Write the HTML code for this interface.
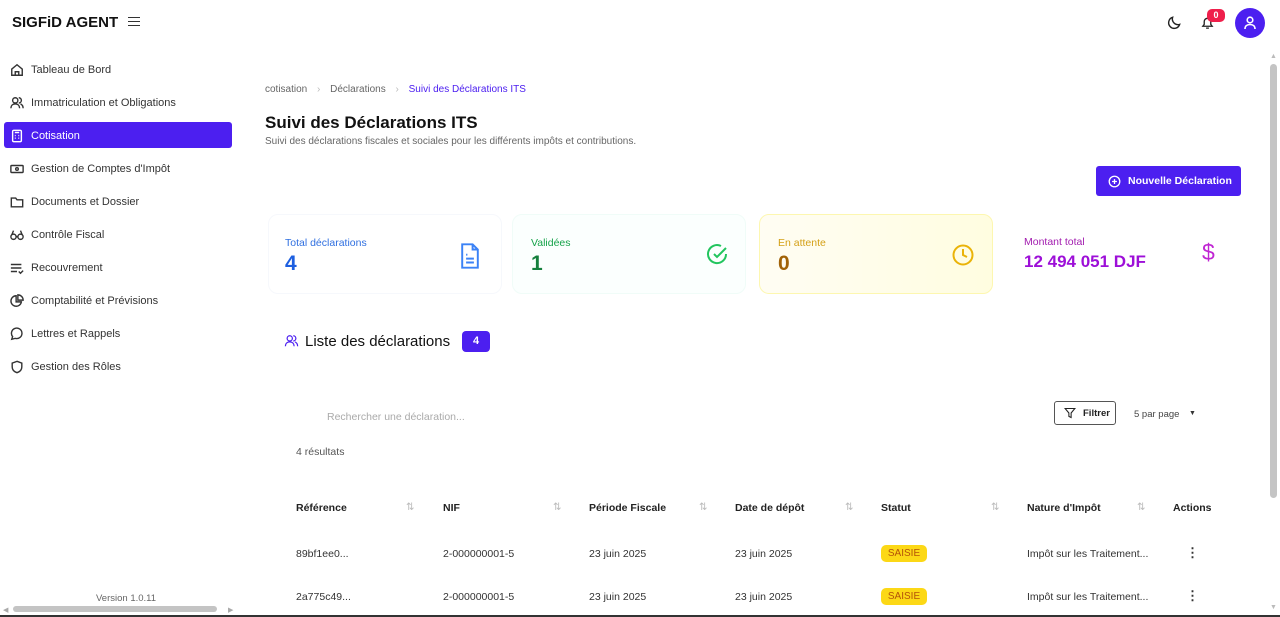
<!DOCTYPE html>
<html><head><meta charset="utf-8">
<style>
*{box-sizing:border-box;margin:0;padding:0}
body{width:1280px;height:617px;overflow:hidden;background:#fff;font-family:"Liberation Sans",sans-serif;color:#222;position:relative}
.abs{position:absolute}
.nav{position:absolute;left:10px;font-size:11px;color:#333;display:flex;align-items:center;gap:7px}
.nav svg{width:14px;height:14px;stroke:#333;fill:none;stroke-width:1.6}
.card{position:absolute;top:214px;width:234px;height:80px;border-radius:10px}
.lbl{position:absolute;left:24px;top:22px;font-size:10.5px}
.val{position:absolute;left:24px;top:37px;font-size:21px;font-weight:bold}
.th{position:absolute;top:502px;font-size:10.5px;font-weight:bold;color:#222}
.td{position:absolute;font-size:10.5px;color:#333}
.sort{position:absolute;top:502px;font-size:10px;color:#bbb}
.badge{position:absolute;left:881px;width:46px;height:17px;background:#fcd816;border-radius:5px;font-size:10px;color:#b45309;text-align:center;line-height:17px}
</style></head><body>
<div class="abs" style="left:12px;top:14px;font-size:15px;font-weight:bold;color:#111">SIGFiD AGENT</div>
<div class="abs" style="left:128px;top:17px;width:12px;height:9px;border-top:1.5px solid #333;border-bottom:1.5px solid #333"><div style="margin-top:2.5px;border-top:1.5px solid #333"></div></div>

<div class="nav" style="top:63px"><svg viewBox="0 0 16 16"><path d="M2 14V7l6-5 6 5v7z M6 14v-4h4v4"/></svg>Tableau de Bord</div>
<div class="nav" style="top:96px"><svg viewBox="0 0 16 16"><circle cx="6" cy="5" r="3"/><path d="M1 14c0-3 2-5 5-5s5 2 5 5M10 2a3 3 0 010 6M12 9c2 1 3 3 3 5"/></svg>Immatriculation et Obligations</div>
<div class="abs" style="left:4px;top:122px;width:228px;height:26px;background:#4c1ff0;border-radius:3px"></div>
<div class="nav" style="top:129px;color:#fff"><svg viewBox="0 0 16 16" style="stroke:#fff"><rect x="3" y="1.5" width="10" height="13" rx="1.5"/><path d="M5.5 4h5M5.5 7.5h1M9.5 7.5h1M5.5 10.5h1M9.5 10.5h1"/></svg>Cotisation</div>
<div class="nav" style="top:162px"><svg viewBox="0 0 16 16"><rect x="1" y="4" width="14" height="8" rx="1"/><circle cx="8" cy="8" r="1.5"/></svg>Gestion de Comptes d'Impôt</div>
<div class="nav" style="top:195px"><svg viewBox="0 0 16 16"><path d="M1.5 3.5h5l1.5 2h6.5v8h-13z"/></svg>Documents et Dossier</div>
<div class="nav" style="top:228px"><svg viewBox="0 0 16 16"><circle cx="4" cy="10" r="3"/><circle cx="12" cy="10" r="3"/><path d="M7 10h2M2 8l2-5M14 8l-2-5"/></svg>Contrôle Fiscal</div>
<div class="nav" style="top:261px"><svg viewBox="0 0 16 16"><path d="M1 4h12M1 8h12M1 12h7M10 12l2 2 3-3"/></svg>Recouvrement</div>
<div class="nav" style="top:294px"><svg viewBox="0 0 16 16"><path d="M7 2a6 6 0 106 7H7z M9 1v6h6a6 6 0 00-6-6z"/></svg>Comptabilité et Prévisions</div>
<div class="nav" style="top:327px"><svg viewBox="0 0 16 16"><path d="M2 14l1-3a6 6 0 113 2z"/></svg>Lettres et Rappels</div>
<div class="nav" style="top:360px"><svg viewBox="0 0 16 16"><path d="M8 1.5l5.5 2v4.5c0 3.5-2.5 5.5-5.5 6.5C5 13.5 2.5 11.5 2.5 8V3.5z"/></svg>Gestion des Rôles</div>
<div class="abs" style="left:96px;top:593px;font-size:9.5px;color:#666">Version 1.0.11</div>
<div class="abs" style="left:3px;top:606px;font-size:7px;color:#aaa">◀</div>
<div class="abs" style="left:13px;top:606px;width:204px;height:6px;background:#c4c4c4;border-radius:3px"></div>
<div class="abs" style="left:228px;top:606px;font-size:7px;color:#aaa">▶</div>

<svg class="abs" style="left:1167px;top:15px" width="15" height="15" viewBox="0 0 16 16" fill="none" stroke="#222" stroke-width="1.5"><path d="M13.5 10A6 6 0 016 2.5 6 6 0 1013.5 10z"/></svg>
<svg class="abs" style="left:1200px;top:15px" width="15" height="15" viewBox="0 0 16 16" fill="none" stroke="#222" stroke-width="1.4"><path d="M3 12h10l-1.5-2V7a3.5 3.5 0 00-7 0v3z M6.5 14h3"/></svg>
<div class="abs" style="left:1207px;top:9px;width:18px;height:13px;background:#ef1f4b;border-radius:5px;color:#fff;font-size:9px;font-weight:bold;text-align:center;line-height:13px">0</div>
<div class="abs" style="left:1235px;top:8px;width:30px;height:30px;border-radius:50%;background:#4c1ff0"></div>
<svg class="abs" style="left:1242px;top:15px" width="16" height="16" viewBox="0 0 16 16" fill="none" stroke="#fff" stroke-width="1.6"><circle cx="8" cy="5" r="2.8"/><path d="M3 14c0-3 2-4.5 5-4.5s5 1.5 5 4.5"/></svg>
<div class="abs" style="left:1270px;top:53px;font-size:7px;color:#bbb">▲</div>
<div class="abs" style="left:1270px;top:64px;width:7px;height:434px;background:#c4c4c4;border-radius:4px"></div>
<div class="abs" style="left:1270px;top:604px;font-size:7px;color:#bbb">▼</div>
<div class="abs" style="left:0;top:615px;width:1280px;height:2px;background:#333"></div>

<div class="abs" style="left:265px;top:84px;font-size:10px;color:#666">cotisation <span style="color:#bbb;margin:0 7px">›</span> Déclarations <span style="color:#bbb;margin:0 7px">›</span> <span style="color:#4c1ff0">Suivi des Déclarations ITS</span></div>
<div class="abs" style="left:265px;top:113px;font-size:17px;font-weight:bold;color:#111">Suivi des Déclarations ITS</div>
<div class="abs" style="left:265px;top:136px;font-size:10px;color:#666">Suivi des déclarations fiscales et sociales pour les différents impôts et contributions.</div>

<div class="abs" style="left:1096px;top:166px;width:145px;height:30px;background:#4c1ff0;border-radius:3px;color:#fff;font-size:10.5px;font-weight:bold;line-height:30px;padding-left:32px">Nouvelle Déclaration</div>
<svg class="abs" style="left:1108px;top:175px" width="13" height="13" viewBox="0 0 16 16" fill="none" stroke="#fff" stroke-width="1.6"><circle cx="8" cy="8" r="6.5"/><path d="M8 5v6M5 8h6"/></svg>

<div class="card" style="left:268px;border:1px solid #f6f8fc"><div class="lbl" style="color:#2f6fe0;left:16px">Total déclarations</div><div class="val" style="color:#1d5fe0;left:16px">4</div>
<svg class="abs" style="left:190px;top:28px" width="22" height="26" viewBox="0 0 16 20" fill="none" stroke="#3b82f6" stroke-width="1.5"><path d="M2 1h8l4 4v14H2z M10 1v4h4 M5 9h1M5 12h6M5 15h6"/></svg></div>
<div class="card" style="left:512px;border:1px solid #f0fcf8;background:#fbfffe"><div class="lbl" style="color:#16a34a;left:18px">Validées</div><div class="val" style="color:#15803d;left:18px">1</div>
<svg class="abs" style="left:192px;top:28px" width="24" height="24" viewBox="0 0 24 24" fill="none" stroke="#22c55e" stroke-width="2"><path d="M21 11a9 9 0 11-5-8M9 11l3 3 9-9"/></svg></div>
<div class="card" style="left:759px;border:1px solid #fdf7b0;background:linear-gradient(90deg,#fffdf3,#fffde0)"><div class="lbl" style="color:#d4a017;left:18px">En attente</div><div class="val" style="color:#a16207;left:18px">0</div>
<svg class="abs" style="left:191px;top:28px" width="24" height="24" viewBox="0 0 24 24" fill="none" stroke="#eab308" stroke-width="2"><circle cx="12" cy="12" r="9.5"/><path d="M12 6v6l4 2"/></svg></div>
<div class="card" style="left:1006px"><div class="lbl" style="color:#a21caf;left:18px">Montant total</div><div class="val" style="color:#9d0fd8;left:18px;font-size:17px;top:38px">12 494 051 DJF</div>
<div class="abs" style="left:196px;top:25px;font-size:23px;color:#c026d3">$</div></div>

<svg class="abs" style="left:284px;top:334px" width="15" height="14" viewBox="0 0 16 16" fill="none" stroke="#4c1ff0" stroke-width="1.4"><circle cx="6" cy="5" r="3"/><path d="M1 14c0-3 2-5 5-5s5 2 5 5M10 2a3 3 0 010 6M12 9c2 1 3 3 3 5"/></svg>
<div class="abs" style="left:305px;top:333px;font-size:15px;color:#111">Liste des déclarations</div>
<div class="abs" style="left:462px;top:331px;width:28px;height:21px;background:#4c1ff0;border-radius:4px;color:#fff;font-size:11px;font-weight:bold;text-align:center;line-height:21px">4</div>

<div class="abs" style="left:327px;top:411px;font-size:10.5px;color:#aaa">Rechercher une déclaration...</div>
<div class="abs" style="left:1054px;top:401px;width:62px;height:24px;border:1px solid #555;border-radius:3px;font-size:9.5px;font-weight:bold;line-height:24px;padding-left:28px">Filtrer</div>
<svg class="abs" style="left:1064px;top:407px" width="12" height="12" viewBox="0 0 16 16" fill="none" stroke="#222" stroke-width="1.4"><path d="M1.5 2h13l-5 6v6l-3-1.5V8z"/></svg>
<div class="abs" style="left:1134px;top:409px;font-size:9.5px;color:#444">5 par page</div>
<div class="abs" style="left:1189px;top:410px;font-size:7px;color:#333">▼</div>
<div class="abs" style="left:296px;top:446px;font-size:10.5px;color:#555">4 résultats</div>

<div class="th" style="left:296px">Référence</div><div class="sort" style="left:406px">⇅</div>
<div class="th" style="left:443px">NIF</div><div class="sort" style="left:553px">⇅</div>
<div class="th" style="left:589px">Période Fiscale</div><div class="sort" style="left:699px">⇅</div>
<div class="th" style="left:735px">Date de dépôt</div><div class="sort" style="left:845px">⇅</div>
<div class="th" style="left:881px">Statut</div><div class="sort" style="left:991px">⇅</div>
<div class="th" style="left:1027px">Nature d'Impôt</div><div class="sort" style="left:1137px">⇅</div>
<div class="th" style="left:1173px">Actions</div>

<div class="td" style="left:296px;top:548px">89bf1ee0...</div><div class="td" style="left:443px;top:548px">2-000000001-5</div><div class="td" style="left:589px;top:548px">23 juin 2025</div><div class="td" style="left:735px;top:548px">23 juin 2025</div><div class="badge" style="top:545px">SAISIE</div><div class="td" style="left:1027px;top:548px">Impôt sur les Traitement...</div><div class="td" style="left:1186px;top:545px;font-weight:bold;font-size:13px">⋮</div>
<div class="td" style="left:296px;top:591px">2a775c49...</div><div class="td" style="left:443px;top:591px">2-000000001-5</div><div class="td" style="left:589px;top:591px">23 juin 2025</div><div class="td" style="left:735px;top:591px">23 juin 2025</div><div class="badge" style="top:588px">SAISIE</div><div class="td" style="left:1027px;top:591px">Impôt sur les Traitement...</div><div class="td" style="left:1186px;top:588px;font-weight:bold;font-size:13px">⋮</div>
</body></html>
